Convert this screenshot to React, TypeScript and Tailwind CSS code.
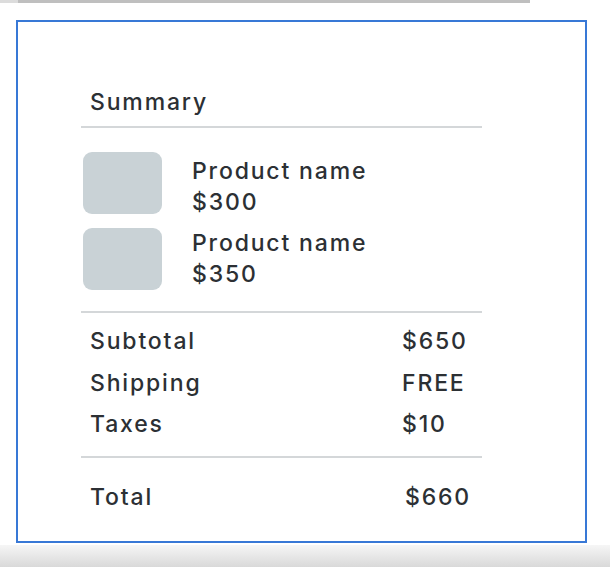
import React from "react"

// ─── DATA ─────────────────────────────────────────────────────────────────────

const PRODUCTS = [
  { name: "Product name", price: "$300", offset: "mt-[4px]" },
  { name: "Product name", price: "$350", offset: "mt-0" },
]

const LINES = [
  { label: "Subtotal", value: "$650" },
  { label: "Shipping", value: "FREE" },
  { label: "Taxes", value: "$10" },
]

const FONT = { fontFamily: "Inter, 'Liberation Sans', sans-serif" }

// ─── COMPONENT ────────────────────────────────────────────────────────────────

export default function App() {
  return (
    <div
      className="flex h-[567px] w-[610px] flex-col overflow-hidden bg-white text-[23px] font-medium tracking-[0.08em] text-[#2c3034]"
      style={FONT}
    >
      {/* top strip */}
      <div className="flex h-[3px] w-[530px]">
        <div className="w-[18px] bg-[#dcdcdc]" />
        <div className="flex-1 bg-[#bfbfbf]" />
      </div>

      {/* ── SUMMARY CARD ─────────────────────────────────────────────── */}
      <div className="ml-[16px] mt-[17px] box-border h-[523px] w-[571px] border-2 border-[#3878d6] pl-[63px] pt-[66px]">
        <div className="w-[401px]">
          <h2 className="pl-[9px] font-medium leading-[28px]">Summary</h2>
          <div className="mt-[10px] h-[2px] bg-[#d4d7d9]" />

          {/* products */}
          <div className="mt-[24px] flex flex-col gap-[14px]">
            {PRODUCTS.map((p, i) => (
              <div key={i} className="flex h-[62px] items-start">
                <div className="ml-[2px] h-[62px] w-[79px] shrink-0 rounded-[9px] bg-[#c9d2d6]" />
                <div className={`ml-[30px] leading-[31px] ${p.offset}`}>
                  <p>{p.name}</p>
                  <p>{p.price}</p>
                </div>
              </div>
            ))}
          </div>

          <div className="mt-[21px] h-[2px] bg-[#d4d7d9]" />

          {/* line items */}
          <div className="mt-[8px] pl-[9px]">
            {LINES.map((l) => (
              <div key={l.label} className="grid grid-cols-[312px_1fr] leading-[41.5px]">
                <span>{l.label}</span>
                <span>{l.value}</span>
              </div>
            ))}
          </div>

          <div className="mt-[10px] h-[2px] bg-[#d4d7d9]" />

          <div className="mt-[19px] grid grid-cols-[312px_1fr] pl-[9px] leading-[41.5px]">
            <span>Total</span>
            <span className="pl-[3px]">$660</span>
          </div>
        </div>
      </div>

      {/* bottom shade */}
      <div className="mt-[2px] flex-1 bg-linear-to-b from-[#f6f6f6] to-[#d9d9d9]" />
    </div>
  )
}
